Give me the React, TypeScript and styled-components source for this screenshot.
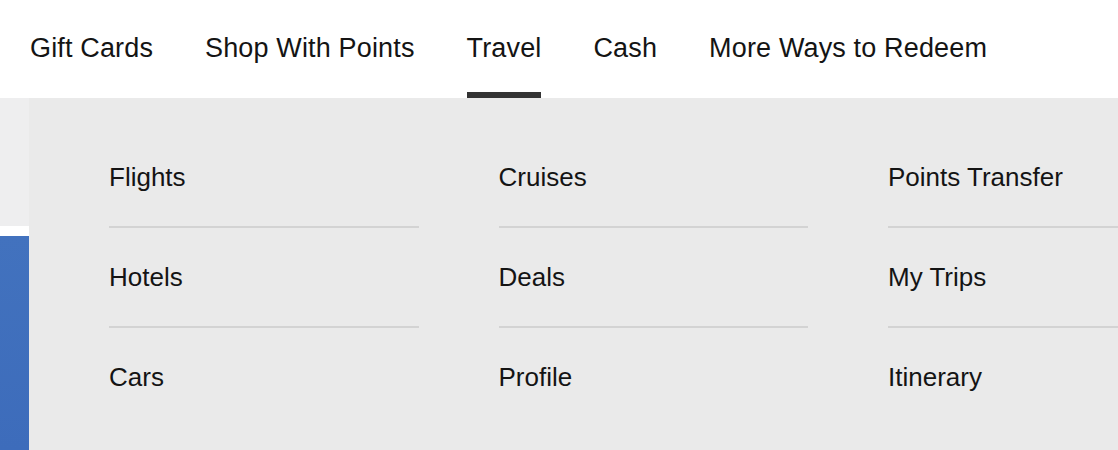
import React from "react";
import styled, { createGlobalStyle } from "styled-components";

const Global = createGlobalStyle`
  html, body { margin: 0; padding: 0; background: #ffffff; }
  body { font-family: "Liberation Sans", Arial, sans-serif; color: #111111; }
  * { box-sizing: border-box; }
`;

const Page = styled.div`
  width: 1118px;
  height: 450px;
  overflow: hidden;
  display: flex;
  flex-direction: column;
`;

const TopNav = styled.nav`
  height: 98px;
  display: flex;
  align-items: flex-start;
  gap: 52px;
  padding-left: 30px;
  background: #ffffff;
  flex-shrink: 0;
`;

const NavItem = styled.a<{ $active?: boolean }>`
  display: block;
  font-size: 27px;
  letter-spacing: 0.15px;
  line-height: 32px;
  padding: 32px 0 28px;
  border-bottom: 6px solid ${(p) => (p.$active ? "#333333" : "transparent")};
  color: #141414;
  text-decoration: none;
  white-space: nowrap;
`;

const Body = styled.div`
  flex: 1;
  display: flex;
  min-height: 0;
`;

const SideStrip = styled.div`
  width: 29px;
  flex-shrink: 0;
  display: flex;
  flex-direction: column;
`;

const SideTop = styled.div`
  height: 128px;
  background: #eeeeef;
`;

const SideGap = styled.div`
  height: 10px;
  background: #ffffff;
`;

const SideBlue = styled.div`
  flex: 1;
  background: linear-gradient(180deg, #4272be 0%, #3d6cbb 100%);
`;

const Panel = styled.div`
  flex: 1;
  background: #eaeaea;
  padding: 30px 0 0 80px;
  display: grid;
  grid-template-columns: repeat(3, 309.5px);
  column-gap: 80px;
  align-content: start;
  overflow: hidden;
`;

const Column = styled.ul`
  list-style: none;
  margin: 0;
  padding: 0;
  display: flex;
  flex-direction: column;
`;

const MenuRow = styled.li<{ $last?: boolean }>`
  font-size: 26px;
  line-height: 30px;
  padding: 34px 0;
  border-bottom: 2px solid ${(p) => (p.$last ? "transparent" : "#d3d3d3")};
  color: #141414;
  white-space: nowrap;
`;

const navItems = ["Gift Cards", "Shop With Points", "Travel", "Cash", "More Ways to Redeem"];

const columns = [
  ["Flights", "Hotels", "Cars"],
  ["Cruises", "Deals", "Profile"],
  ["Points Transfer", "My Trips", "Itinerary"],
];

export default function App() {
  return (
    <>
      <Global />
      <Page>
        <TopNav>
          {navItems.map((n) => (
            <NavItem key={n} $active={n === "Travel"}>
              {n}
            </NavItem>
          ))}
        </TopNav>
        <Body>
          <SideStrip>
            <SideTop />
            <SideGap />
            <SideBlue />
          </SideStrip>
          <Panel>
            {columns.map((col, ci) => (
              <Column key={ci}>
                {col.map((item, i) => (
                  <MenuRow key={item} $last={i === col.length - 1}>
                    {item}
                  </MenuRow>
                ))}
              </Column>
            ))}
          </Panel>
        </Body>
      </Page>
    </>
  );
}
